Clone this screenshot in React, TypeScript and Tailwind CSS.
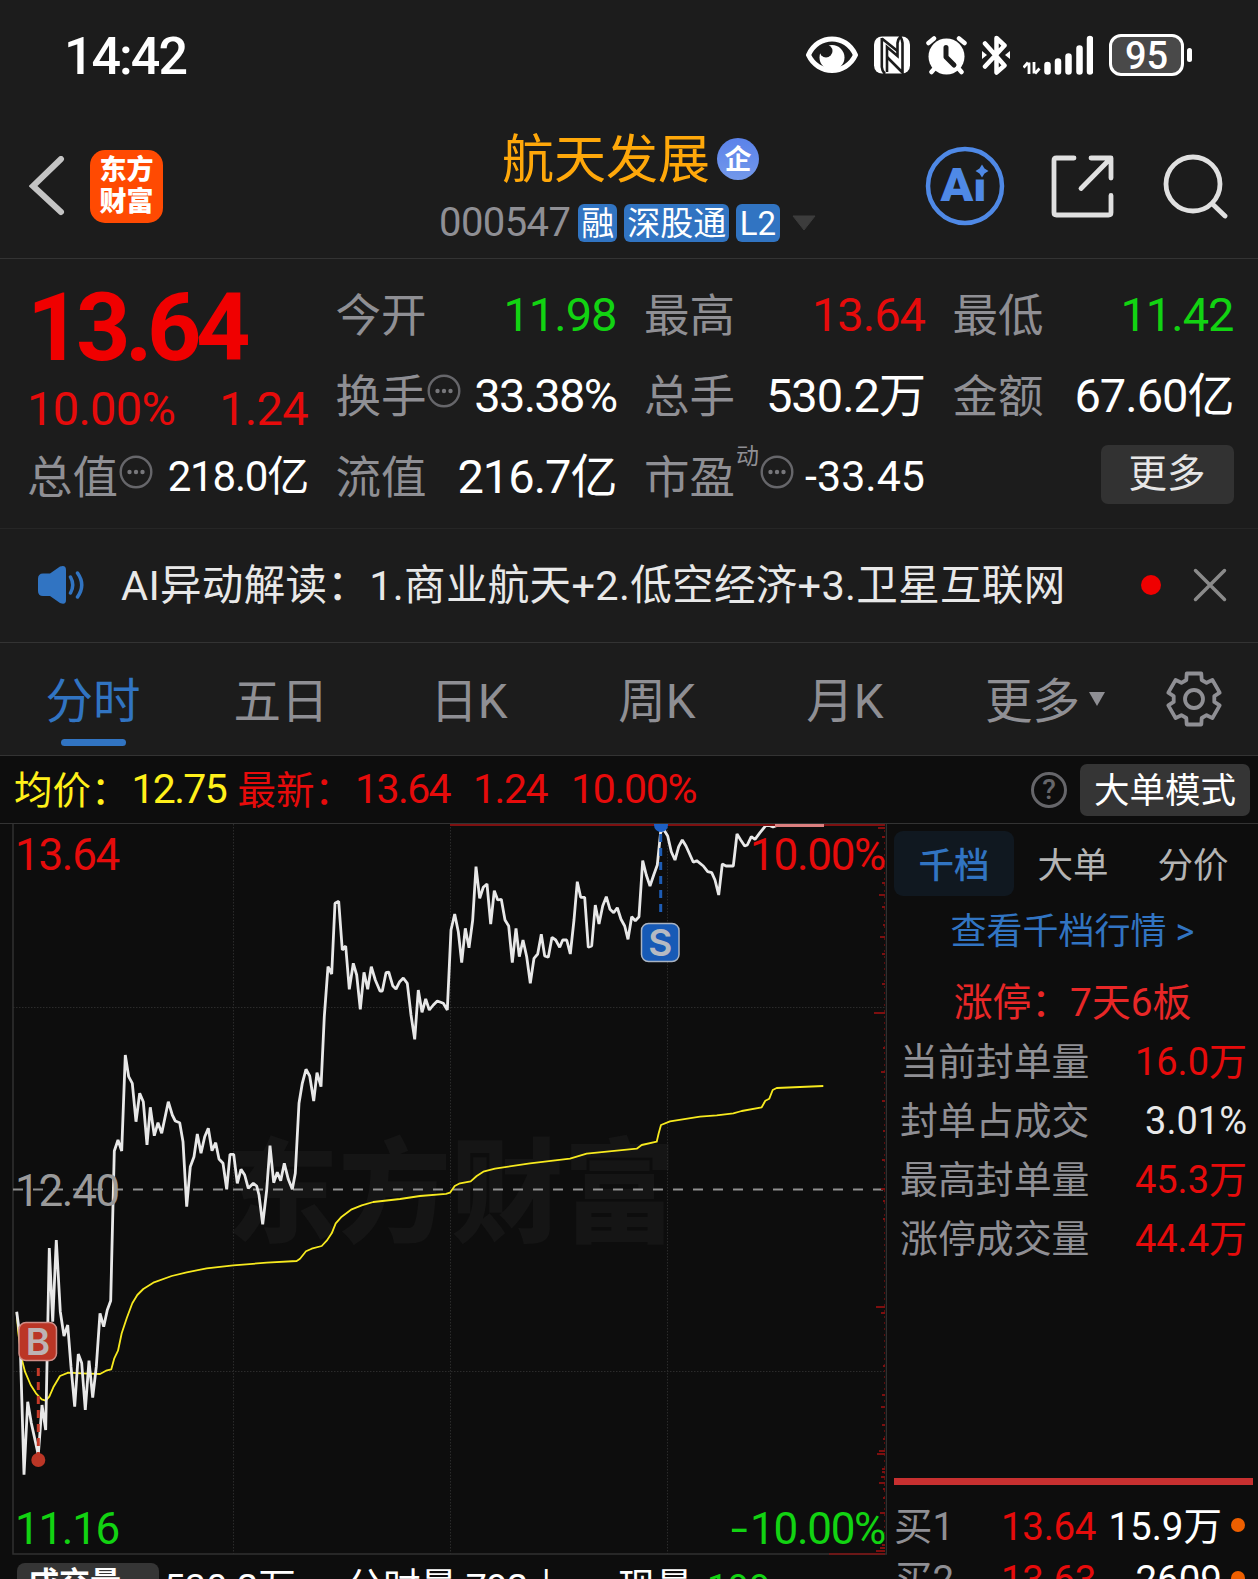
import React from "react";
import clsx from "clsx";

const PRICE_POINTS =
  "16.7,1311.7 20,1337 24,1474.7 27.7,1401.7 31.3,1423 38.3,1455 42,1405 45.7,1430 49.3,1248 52.7,1321.7 56.3,1240 60.3,1311.7 64,1336 67.7,1325 71,1366.7 74.7,1406.7 78.3,1354 81.7,1363 85.3,1410 89,1360.7 92.7,1397.7 96.3,1366.7 100,1313.3 103.7,1326.7 107.3,1310 110.7,1300.7 114.3,1151 118,1140 121.7,1151 125.3,1055 128.7,1076.7 132.3,1083.3 136,1121.7 139.7,1093.3 143.3,1101.7 147,1145 150.3,1107.3 154.3,1135.7 158,1122.7 161.7,1133.3 168.3,1101.7 172.3,1115 175.3,1121 179.7,1122.7 183,1141.7 186.7,1206.7 190.3,1166.7 194,1156.7 197.3,1134 201,1153.3 204.7,1136.7 208.3,1128.3 212,1150.7 215.7,1142.7 219,1159 223,1163.3 226.7,1189.3 230,1154.3 233.7,1154.3 237.3,1183.3 241,1169.3 244.7,1175 248.3,1188.3 253.3,1183.3 256.7,1186 259,1195 262.7,1224.3 266.7,1190 270,1145.7 273.7,1182.7 277.3,1172.3 280.7,1180.7 284.3,1163.3 288.3,1179.3 292.3,1189.3 295.3,1173.3 299,1103.3 302.3,1083.3 306,1069.3 309.7,1076 313.7,1101 317,1072.7 321,1086.7 324.3,1016.7 328,966.7 331.7,974 335,903.3 338.7,901.3 342.3,950 345.7,946 349.3,989.3 353.3,963.3 356.7,975 360.3,1009.3 364,972.3 367.7,989.3 371.3,966.7 375.3,980 380,991 382.3,991 386,972.7 388.7,972 392.7,985.7 396,989 399.7,981.7 403.3,978 407.3,983.3 411,1015 414.7,1039.3 418.3,990 422,1012.3 425.7,999 429.3,1010 433.3,1005 437.3,1001 443.3,1003.3 447.3,1010 451,930 454.7,914 458.3,931.7 461.7,962.7 465.3,928.3 469,947.7 472.7,920 476,866.7 479.7,898.3 483.3,887.3 487,884 490.7,924 494.3,890.7 497.7,900 501.3,899.3 505,920 508.7,926 512.3,962.7 516,928.3 519.3,956.7 523,940 526.7,956.7 530.3,983.3 534,958.3 537.7,954 541.3,934.3 544.7,956 548.3,957.3 552,937.3 555.7,940 559.7,947.3 562.7,940 566.7,940 570.3,954 574,920 577.3,881.7 580.7,897.3 584.7,897.3 588.3,947.3 591.7,946 595.3,905 599,924 602.7,906 606.3,896.7 610,909.3 613.7,912.7 617.3,907.7 621,919.3 624.7,926 628,939.3 631.7,916.7 635.3,920.7 639,916.7 642.7,860.7 646.3,875 650,886 653.7,875 657.3,865 660.7,831.7 664,830 667.7,836 671.3,851.7 675,860 678.7,846.7 682.3,840 686,846 693.3,862.3 696.7,860.7 703.3,866 707.7,871.7 711.7,872.7 715,880 718.7,895 722.3,864 726,866 733.3,866 737,834 740.7,840 744.7,846 747.3,845 751.3,836.7 755,839.3 760,832.7 765.7,825.7 770,825.7 773,827 777,825.5";

const AVERAGE_POINTS =
  "16.7,1313.3 18.3,1333 22,1360 25,1371.7 30.7,1385 36,1393.3 41.7,1399.3 45.7,1400.7 49.3,1396.7 53.3,1387.3 60,1376 68.3,1372.7 81.7,1373.3 100,1374 106,1370.7 111.3,1369.3 114.3,1358.3 118,1350.7 121.7,1333.3 126.7,1318.3 132.3,1303.3 137.3,1295 143.3,1289 153.3,1282.7 171.7,1276 186.7,1272.3 206.7,1268.3 233.3,1265.3 266.7,1262.7 296.7,1261 300,1258.7 306,1251.3 311.7,1248.7 321.7,1246 326.7,1240.7 331.7,1233.3 335.7,1223.3 341.7,1216.7 351.7,1209.3 361.7,1205.3 373.3,1202 400,1199 420,1196 446,1193.8 450,1192.7 454.7,1186 460,1183.3 470.7,1181.3 476.7,1176 483.3,1171.7 495,1168.7 530,1163.3 570,1158.7 586.7,1153.7 636.7,1148.7 641.7,1145 656.7,1141.7 658.7,1133.3 661,1125 670,1121.3 700,1116.7 716.7,1115.3 733.3,1113.3 741.7,1111 761.7,1107.3 765.3,1100.7 769.3,1098.7 772.7,1090 776.7,1088 823.3,1086";

// [y, length] of the turnover ticks along the right axis
const TURNOVER: [number, number][] = [
  [828, 7], [837, 3], [883, 3], [895, 6], [907, 3], [925, 2], [937, 5], [954, 3], [984, 3],
  [1013, 11], [1048, 2], [1072, 4], [1101, 3], [1131, 2], [1160, 3], [1189, 4], [1201, 2],
  [1219, 2], [1307, 9], [1313, 4], [1366, 2], [1395, 3], [1407, 4], [1425, 3], [1439, 2],
  [1451, 6], [1454, 8], [1469, 3], [1472, 3], [1477, 4], [1483, 6], [1489, 2], [1498, 2],
  [1513, 5], [1545, 3], [1548, 5], [1551, 9],
];

const SEAL_ROWS = [
  { label: "当前封单量", value: "16.0万", color: "text-[#e60b0b]" },
  { label: "封单占成交", value: "3.01%", color: "text-[#e8e8e8]" },
  { label: "最高封单量", value: "45.3万", color: "text-[#e60b0b]" },
  { label: "涨停成交量", value: "44.4万", color: "text-[#e60b0b]" },
];

const BIDS = [
  { label: "买1", price: "13.64", volume: "15.9万" },
  { label: "买2", price: "13.63", volume: "2609" },
];

function gearPoints(cx: number, cy: number) {
  const points: string[] = [];
  for (let i = 0; i < 6; i++) {
    for (const [r, a] of [[20.5, -22], [26.5, -16], [26.5, 16], [20.5, 22]]) {
      const t = ((i * 60 + a - 90) * Math.PI) / 180;
      points.push(`${(cx + r * Math.cos(t)).toFixed(1)},${(cy + r * Math.sin(t)).toFixed(1)}`);
    }
  }
  return points.join(" ");
}

function StatusBar() {
  return (
    <div className="flex h-[110px] items-center justify-between pl-[64px] pr-[66px] text-white">
      <span className="pt-[4px] text-[52px] font-medium leading-none tracking-[-2px]">14:42</span>
      <div className="flex items-center">
        <svg className="mr-4" width="52" height="42" viewBox="806 34 52 42">
          <path d="M808.500 55 C818 33.500 846 33.500 855.500 55 C846 75.500 818 75.500 808.500 55Z" fill="none" stroke="#fff" strokeWidth="5" strokeLinejoin="round" />
          <circle cx="832" cy="57.500" r="12.500" fill="#fff" />
          <circle cx="826" cy="51" r="6.500" fill="#1c1c1c" />
        </svg>
        <svg className="mr-4" width="36" height="42" viewBox="874 34 36 42">
          <rect x="874" y="36.500" width="36" height="37" rx="8" fill="#fff" />
          <g fill="none" stroke="#1c1c1c" strokeWidth="2.600">
            <path d="M881.800 38 V67 Q882 71 885 74 M881.800 38.500 L897.500 51" />
            <path d="M887 72 V47 L897.500 56 V43 Q898 39 901 36" />
            <path d="M887 57 L902.500 72.500 V43 Q902 39 900 36" />
          </g>
        </svg>
        <svg className="mr-[15px]" width="41" height="42" viewBox="926 34 41 42">
          <circle cx="946.500" cy="56.500" r="18" fill="#fff" />
          <path d="M946 47.500 V57 L954 65" fill="none" stroke="#1c1c1c" strokeWidth="5" strokeLinecap="round" strokeLinejoin="round" />
          <path d="M928.500 43 L934 38.500 M964.500 43 L959 38.500 M935 68 L931.500 72 M958 68 L961.500 72" stroke="#fff" strokeWidth="4.500" strokeLinecap="round" />
        </svg>
        <svg className="mr-[13px]" width="28" height="42" viewBox="982 34 28 42">
          <path d="M985 43.500 L1004.500 65.500 L996.500 72.500 V38 L1004.500 45.500 L985 66.500" fill="none" stroke="#fff" strokeWidth="4.500" strokeLinecap="round" strokeLinejoin="round" />
          <path d="M982 51 L987 55 L982 59Z M1010 51 L1005 55 L1010 59Z" fill="#fff" />
        </svg>
        <svg className="mr-4" width="70" height="42" viewBox="1023 34 70 42">
          <path d="M1023.500 67.500 L1028 62.500 M1029 74 V62.500 M1034 62 V73.500 M1035 73.500 L1039.500 68.500" stroke="#fff" strokeWidth="2.800" />
          <path d="M1047.500 65 V71.500 M1058 61.500 V71.500 M1068.500 56.500 V71.500 M1079.500 48.500 V71.500 M1090 39 V71.500" stroke="#fff" strokeWidth="6.500" strokeLinecap="round" />
        </svg>
        <div className="flex h-[42px] w-[75px] items-center justify-center rounded-[12px] border-[3px] border-white bg-[#494949] pt-[2px] text-[38px] font-medium leading-none">
          95
        </div>
        <div className="ml-[3px] h-[14px] w-[5px] rounded-full bg-white" />
      </div>
    </div>
  );
}

function Tag({ children }: { children: React.ReactNode }) {
  return (
    <span className="mr-[7px] flex h-[38px] items-center rounded-[6px] bg-[#3174c2] px-[3px] pt-[2px] text-[33px] leading-none text-white">
      {children}
    </span>
  );
}

function Header() {
  return (
    <div className="grid h-[149px] grid-cols-[439px_1fr_333px] border-b border-[#333] pb-px">
      <div className="flex items-center pl-[29px] pt-[5px]">
        <svg width="36" height="60" viewBox="29 156 36 60">
          <path d="M61 159 L33 186 L61 212" fill="none" stroke="#c4c4c4" strokeWidth="6" strokeLinecap="round" />
        </svg>
        <div className="ml-[25px] flex h-[73px] w-[73px] flex-col items-center justify-center gap-[5px] rounded-[15px] bg-[#ff4a02] pt-[1px] text-[27px] font-black leading-[27px] text-white">
          <span>东方</span>
          <span>财富</span>
        </div>
      </div>
      <div className="flex flex-col pt-[20px]">
        <div className="flex h-[57px] items-center pl-[63px] pt-[1px]">
          <span className="pt-[4px] text-[52px] leading-none text-[#ffa80a]">航天发展</span>
          <span className="ml-[7px] flex h-[42px] w-[42px] items-center justify-center rounded-full bg-linear-to-b from-[#5b82ea] to-[#7398ea] pt-[3px] text-[27px] font-bold leading-none text-white">
            企
          </span>
        </div>
        <div className="mt-[16px] flex h-[38px] items-center whitespace-nowrap pt-[1px]">
          <span className="mr-[8px] text-[40px] leading-none tracking-[-0.600px] text-[#8f8f94]">000547</span>
          <Tag>融</Tag>
          <Tag>深股通</Tag>
          <Tag><span className="px-[0.500px]">L2</span></Tag>
          <svg className="ml-[5px]" width="24" height="16" viewBox="0 0 24 16">
            <path d="M1 1 H23 L12 15Z" fill="#3c3c3c" stroke="#3c3c3c" strokeLinejoin="round" />
          </svg>
        </div>
      </div>
      <div className="flex items-center pt-[5px]">
        <svg width="80" height="80" viewBox="925 146 80 80">
          <text x="940.500" y="200.500" fontSize="46" fontWeight="900" fill="#4f89e6" textLength="46" lengthAdjust="spacingAndGlyphs">
            Ai
          </text>
          <path d="M972.500 160 H990 V179.500 H972.500Z" fill="#1c1c1c" />
          <circle cx="965" cy="186" r="37" fill="none" stroke="#4f89e6" strokeWidth="4.500" />
          <path d="M982 164.500 L984.500 168.500 L988.500 171 L984.500 173.500 L982 177.500 L979.500 173.500 L975.500 171 L979.500 168.500Z" fill="#4f89e6" />
        </svg>
        <svg className="ml-[46px]" width="63" height="63" viewBox="1050.500 154.500 63 63">
          <path
            d="M1073.500 157.500 H1056 Q1053.500 157.500 1053.500 160 V212 Q1053.500 214.500 1056 214.500 H1108 Q1110.500 214.500 1110.500 212 V195 M1090.500 157.500 H1110.500 V177.500 M1109.500 158.500 L1080.500 188"
            fill="none" stroke="#e0e0e0" strokeWidth="4.800" strokeLinecap="round" strokeLinejoin="round"
          />
        </svg>
        <svg className="ml-[48px]" width="66" height="66" viewBox="1162 152 66 66">
          <circle cx="1193" cy="183" r="27" fill="none" stroke="#e0e0e0" strokeWidth="4.800" />
          <path d="M1213 203.500 L1225 215" stroke="#e0e0e0" strokeWidth="4.800" strokeLinecap="round" />
        </svg>
      </div>
    </div>
  );
}

function MoreDots() {
  return (
    <svg className="shrink-0" width="34" height="34" viewBox="0 0 34 34">
      <circle cx="17" cy="17" r="15.300" fill="none" stroke="#66666a" strokeWidth="2.400" />
      <circle cx="10.500" cy="17" r="2.200" fill="#77777b" />
      <circle cx="17" cy="17" r="2.200" fill="#77777b" />
      <circle cx="23.500" cy="17" r="2.200" fill="#77777b" />
    </svg>
  );
}

interface QuoteCellProps {
  label: string;
  value: string;
  color?: string;
  size?: string;
  dots?: boolean;
  sup?: string;
}

function QuoteCell({ label, value, color = "text-white", size = "text-[47px] tracking-[-1px]", dots, sup }: QuoteCellProps) {
  return (
    <div className="flex h-[81px] items-center justify-between whitespace-nowrap leading-none">
      <div className="flex items-center">
        <span className="pt-[6px] text-[45.500px] text-[#8f8f94]">{label}</span>
        {sup && <span className="-mt-[38px] ml-[1px] text-[23px] text-[#8f8f94]">{sup}</span>}
        {dots && (
          <span className="-mt-[7px] ml-[0.500px]">
            <MoreDots />
          </span>
        )}
      </div>
      <span className={clsx("pt-[1px]", size, color)}>{value}</span>
    </div>
  );
}

function Quote() {
  return (
    <div className="grid h-[270px] grid-cols-[repeat(4,281px)] grid-rows-[81px_81px_81px] gap-x-[27.500px] border-b border-[#262626] pl-[27px] pt-[14px]">
      <div className="row-span-2 flex flex-col leading-none text-[#f00000]">
        <span className="mt-[8px] text-[95px] font-bold leading-[94px] tracking-[-5.500px]">13.64</span>
        <div className="mt-[10px] flex justify-between text-[47px] tracking-[-0.700px] text-[#e60b0b]">
          <span>10.00%</span>
          <span>1.24</span>
        </div>
      </div>
      <QuoteCell label="今开" value="11.98" color="text-[#12d312]" />
      <QuoteCell label="最高" value="13.64" color="text-[#e60b0b]" />
      <QuoteCell label="最低" value="11.42" color="text-[#12d312]" />
      <QuoteCell label="换手" value="33.38%" size="text-[47px] tracking-[-1.700px]" dots />
      <QuoteCell label="总手" value="530.2万" />
      <QuoteCell label="金额" value="67.60亿" />
      <QuoteCell label="总值" value="218.0亿" size="pt-[3px] text-[42px] tracking-[-1.200px]" dots />
      <QuoteCell label="流值" value="216.7亿" />
      <QuoteCell label="市盈" value="-33.45" size="text-[43px]" sup="动" dots />
      <div className="flex items-center justify-end">
        <button className="-mt-[3px] h-[59px] w-[133px] rounded-[7px] bg-[#323232] text-[38.500px] leading-none text-[#e6e6e6]">更多</button>
      </div>
    </div>
  );
}

function News() {
  return (
    <div className="flex h-[114px] items-center border-b border-[#333] pl-[37px] pr-[31px]">
      <svg width="48" height="46" viewBox="37 563 48 46">
        <path d="M43 573.500 H50 L60 566.500 Q66 564.500 66 570 V600 Q66 605.500 60 603 L50 596 H43 Q38 596 38 591 V579 Q38 573.500 43 573.500Z" fill="#3174c2" />
        <path d="M70.500 577 Q75 585 70.500 593 M77.500 573 Q86 585 77.500 597" fill="none" stroke="#3174c2" strokeWidth="3.500" strokeLinecap="round" />
      </svg>
      <span className="ml-[36px] flex-1 whitespace-nowrap text-[41.500px] leading-none tracking-[0.330px] text-[#e8e8e8]">
        AI异动解读：1.商业航天+2.低空经济+3.卫星互联网
      </span>
      <span className="-mt-[2px] h-5 w-5 rounded-full bg-[#f00000]" />
      <svg className="-mt-[2px] ml-[32px]" width="34" height="34" viewBox="0 0 34 34">
        <path d="M2.500 2.500 L31.500 31.500 M31.500 2.500 L2.500 31.500" stroke="#8a8a8a" strokeWidth="3.500" strokeLinecap="round" />
      </svg>
    </div>
  );
}

function Tabs() {
  return (
    <div className="flex h-[113px] items-center border-b border-[#333] text-[47.500px] leading-none text-[#8f8f94]">
      {["分时", "五日", "日K", "周K", "月K"].map((tab, i) => (
        <div key={tab} className={clsx("relative flex h-full w-[188px] items-center justify-center pr-[2px] pt-[7px]", i === 0 && "text-[#3174c2]")}>
          {tab}
          {i === 0 && <div className="absolute bottom-[9px] left-[61px] h-[7px] w-[65px] rounded-full bg-[#3174c2]" />}
        </div>
      ))}
      <span className="ml-[45px] pt-[7px]">更多</span>
      <svg className="ml-[9px]" width="16" height="14" viewBox="0 0 16 14">
        <path d="M0 0 H16 L8 14Z" fill="#8f8f94" />
      </svg>
      <svg className="ml-[59px]" width="60" height="60" viewBox="0 0 60 60">
        <polygon points={gearPoints(30, 30)} fill="none" stroke="#8f8f94" strokeWidth="3.800" strokeLinejoin="round" />
        <circle cx="30" cy="30" r="9" fill="none" stroke="#8f8f94" strokeWidth="3.800" />
      </svg>
    </div>
  );
}

function PriceBar() {
  return (
    <div className="flex h-[68px] items-center border-b border-[#333] pl-[14px] pr-[8px] text-[38.500px] leading-none text-[#e60b0b]">
      <span className="mr-[2px] pt-[3px] text-[#fff01a]">均价：</span>
      <span className="w-[106px] text-[41px] tracking-[-1.700px] text-[#fff01a]">12.75</span>
      <span className="mr-[2px] pt-[3px]">最新：</span>
      <span className="w-[118px] text-[41px] tracking-[-1.600px]">13.64</span>
      <span className="w-[98px] text-[41px] tracking-[-1.500px]">1.24</span>
      <span className="flex-1 text-[41px] tracking-[-1.300px]">10.00%</span>
      <span className="flex h-9 w-9 items-center justify-center rounded-full border-[3px] border-[#66666a] pt-[1px] text-[28px] font-medium text-[#66666a]">?</span>
      <span className="ml-[13px] flex h-[52px] w-[170px] items-center justify-center rounded-[7px] bg-[#353535] pt-[5px] text-[35.500px] text-white">
        大单模式
      </span>
    </div>
  );
}

function Chart() {
  return (
    <div className="relative h-[731px] w-[887px] text-[44px] leading-none tracking-[-1.300px]">
      <svg className="block tracking-normal" width="887" height="731" viewBox="0 824 887 731">
        <text x="226" y="1233" fontSize="112.500" fontWeight="900" fill="#151515">东方财富</text>
        <g stroke="#2b2b2b" strokeDasharray="1.500 1.500">
          <path d="M13 1007.500 H885 M13 1371.500 H885 M233.500 824 V1554 M450.500 824 V1554 M667.500 824 V1554" />
        </g>
        <path d="M13 824 V1554 H886.500 V824" fill="none" stroke="#303030" strokeWidth="1.500" />
        <path d="M13 1189.500 H885" stroke="#8f8f8f" strokeWidth="2" strokeDasharray="10 10" />
        <path d="M884.500 824 V1554" stroke="#5a0d0d" strokeDasharray="2 4" />
        {TURNOVER.map(([y, length]) => (
          <path key={y} d={`M${885 - length} ${y} H885`} stroke="#7d0f0f" strokeWidth="2" />
        ))}
        <path d="M829 1554 H885" stroke="#6b1717" strokeWidth="2" />
        <polyline points={AVERAGE_POINTS} fill="none" stroke="#f7ea1e" strokeWidth="1.800" strokeLinejoin="round" />
        <polyline points={PRICE_POINTS} fill="none" stroke="#e8e8e8" strokeWidth="2.800" strokeLinejoin="bevel" />
        <path d="M450 825 H885" stroke="#7d1010" strokeWidth="2" />
        <path d="M775 825.500 H824" stroke="#dc8080" strokeWidth="3" />

        <path d="M38.300 1368 V1458" stroke="#c53a29" strokeWidth="3" strokeDasharray="8 6" />
        <circle cx="38.300" cy="1460" r="7" fill="#bb3626" />
        <rect x="19" y="1322.500" width="37.500" height="38" rx="7" fill="#bb3626" stroke="#d08d86" strokeWidth="1.500" />
        <text x="38" y="1354.500" textAnchor="middle" fontSize="37" fontWeight="600" fill="#bdb3b3" fontFamily="Inter">B</text>

        <path d="M660.700 834 V918" stroke="#1d5cb4" strokeWidth="3" strokeDasharray="8 6" />
        <circle cx="661" cy="825" r="7" fill="#1d5fc4" />
        <rect x="641.500" y="923.500" width="37.500" height="38" rx="7" fill="#175ab6" stroke="#a9b3c2" strokeWidth="1.500" />
        <text x="660.300" y="956" textAnchor="middle" fontSize="37" fontWeight="600" fill="#b5bac2" fontFamily="Inter">S</text>
      </svg>
      <span className="absolute left-[15px] top-[9px] text-[#e60b0b]">13.64</span>
      <span className="absolute right-[2px] top-[9px] text-[#e60b0b]">10.00%</span>
      <span className="absolute left-[15px] top-[345px] text-[#9a9a9a]">12.40</span>
      <span className="absolute bottom-[4px] left-[15px] text-[#12d312]">11.16</span>
      <span className="absolute bottom-[4px] right-[2px] text-[#12d312]">
        <span className="mr-[4px] inline-block origin-right scale-x-140">-</span>10.00%
      </span>
    </div>
  );
}

function DepthPanel() {
  return (
    <div className="flex-1 whitespace-nowrap leading-none">
      <div className="ml-[7px] mt-[7px] flex text-[35.500px] text-[#b4b4b4]">
        <span className="flex h-[65px] w-[120px] items-center justify-center rounded-[9px] bg-[#101820] pt-[7px] font-medium text-[#3174c2]">千档</span>
        <span className="flex h-[65px] w-[118px] items-center justify-center pt-[7px]">大单</span>
        <span className="flex h-[65px] w-[122px] items-center justify-center pt-[7px]">分价</span>
      </div>
      <div className="flex h-[67px] items-center justify-center pt-[4px] text-[36px] text-[#3174c2]">查看千档行情 &gt;</div>
      <div className="flex h-[68px] items-end justify-center pb-[8px] text-[38.800px] text-[#e82727]">涨停：7天6板</div>
      {SEAL_ROWS.map((row) => (
        <div key={row.label} className="flex h-[59px] items-center justify-between pl-[13px] pr-[11px] pt-[3px]">
          <span className="pt-[2px] text-[37.900px] text-[#8f8f94]">{row.label}</span>
          <span className={clsx("text-[38px]", row.color)}>{row.value}</span>
        </div>
      ))}
      <div className="ml-[7px] mr-[5px] mt-[211px] h-[7px] bg-[#c73030]" />
      <div className="pt-[14px]">
        {BIDS.map((bid) => (
          <div key={bid.label} className="flex h-[53px] items-center pl-[7px] text-[38.500px]">
            <span className="w-[107px] pt-[3px] text-[#8f8f94]">{bid.label}</span>
            <span className="w-[98px] pt-[3px] tracking-[-0.300px] text-[#e60b0b]">{bid.price}</span>
            <span className="flex-1 pt-[3px] text-right text-white">{bid.volume}</span>
            <span className="-mt-[2px] ml-[9px] mr-[13px] h-[14px] w-[14px] rounded-full bg-[#ee5f00]" />
          </div>
        ))}
      </div>
    </div>
  );
}

export default function App() {
  return (
    <div className="h-[1579px] w-[1258px] overflow-hidden bg-[#1c1c1c] font-[Roboto,'Noto_Sans_CJK_SC',sans-serif]">
      <StatusBar />
      <Header />
      <Quote />
      <News />
      <Tabs />
      <div className="bg-[#0d0d0d]">
        <PriceBar />
        <div className="flex h-[800px]">
          <div className="w-[887px]">
            <Chart />
            <div className="flex whitespace-nowrap pl-[17px] pt-[8px] text-[37.500px] leading-none text-white">
              <span className="flex h-[50px] w-[142px] items-start rounded-[8px] bg-[#353535] pl-[11px] pt-[5px] text-[31px] font-bold">
                成交量
              </span>
              <span className="ml-[5px] w-[182px] pt-[6px]">530.2万</span>
              <span className="w-[272px] pt-[6px] tracking-[-0.500px]">分时量 792↓</span>
              <span className="pt-[6px]">现量</span>
              <span className="ml-[14px] pt-[6px] text-[#12d312]">199</span>
            </div>
          </div>
          <DepthPanel />
        </div>
      </div>
    </div>
  );
}
